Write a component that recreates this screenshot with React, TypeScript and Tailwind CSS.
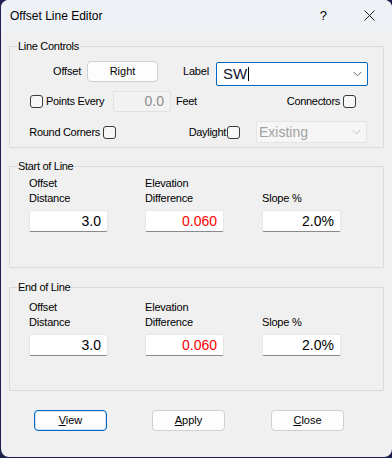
import React from "react";

const FONT = "font-['Liberation_Sans',Arial,sans-serif]";

function Check() {
  return <span className="inline-block w-[13px] h-[13px] rounded-[3px] border border-[#3a3a3a] bg-[#f7f7f7] shrink-0" />;
}

function Chevron({ color }: { color: string }) {
  return (
    <svg width="9" height="6" viewBox="0 0 9 6" className="shrink-0">
      <polyline points="0.5,0.8 4.5,4.8 8.5,0.8" fill="none" stroke={color} strokeWidth="1" />
    </svg>
  );
}

function Field({ value, red }: { value: string; red?: boolean }) {
  return (
    <div
      className={`w-[79px] h-[22px] bg-white border border-[#e6e6e6] border-b-[#8a8a8a] rounded-[2px] flex items-center justify-end pr-[6px] text-[14px] ${
        red ? "text-[#ff0000]" : "text-black"
      }`}
    >
      {value}
    </div>
  );
}

function Group({ title, children, className }: { title: string; children: React.ReactNode; className?: string }) {
  return (
    <fieldset className={`border border-[#d9d9d9] rounded-[1px] ${className ?? ""}`}>
      <legend className="ml-[7px] px-[1px] text-[11px] leading-[14px] tracking-[-0.3px] whitespace-nowrap">{title}</legend>
      {children}
    </fieldset>
  );
}

function LineFields({ pt, pb }: { pt: string; pb: string }) {
  const cols = [
    { l1: "Offset", l2: "Distance", v: "3.0", red: false, w: "w-[116px]" },
    { l1: "Elevation", l2: "Difference", v: "0.060", red: true, w: "w-[117px]" },
    { l1: "", l2: "Slope %", v: "2.0%", red: false, w: "w-[79px]" },
  ];
  return (
    <div className={`flex pl-[19px] ${pt} ${pb}`}>
      {cols.map((c, i) => (
        <div key={i} className={`${c.w} flex flex-col`}>
          <div className="h-[30px] flex flex-col justify-end text-[11px] leading-[15px] tracking-[-0.2px] whitespace-nowrap">
            {c.l1 && <div>{c.l1}</div>}
            <div>{c.l2}</div>
          </div>
          <div className="mt-[4px]">
            <Field value={c.v} red={c.red} />
          </div>
        </div>
      ))}
    </div>
  );
}

function DlgButton({ label, focused }: { label: React.ReactNode; focused?: boolean }) {
  return (
    <div
      className={`w-[73px] h-[21px] rounded-[4px] bg-[#fdfdfd] flex items-center justify-center text-[11px] ${
        focused ? "border border-[#0067c0] shadow-[inset_0_0_0_1px_#cfe3f5]" : "border border-[#d0d0d0]"
      }`}
    >
      {label}
    </div>
  );
}

export default function App() {
  return (
    <div className={`w-[392px] h-[458px] bg-[#1d1f4f] ${FONT} text-black`}>
      <div className="ml-[1px] w-[391px] h-[457px] rounded-[8px] overflow-hidden bg-[#f0f0f0] flex flex-col">
        {/* Title bar */}
        <div className="h-[31px] bg-[#eef2f7] flex items-center pl-[9px] shrink-0">
          <span className="text-[12px]">Offset Line Editor</span>
          <span className="ml-auto text-[13px] mr-[37px]">?</span>
          <svg width="11" height="11" viewBox="0 0 11 11" className="mr-[17px]">
            <path d="M0.5 0.5 L10.5 10.5 M10.5 0.5 L0.5 10.5" stroke="#1a1a1a" strokeWidth="1" />
          </svg>
        </div>

        {/* Body */}
        <div className="flex-1 px-[8px] pt-[8px] flex flex-col whitespace-nowrap">
          <Group title="Line Controls" className="pt-[8px] pb-[4px]">
            {/* Row 1 */}
            <div className="flex items-start h-[25px] text-[11px] tracking-[-0.2px]">
              <div className="w-[71px] text-right leading-[21px]">Offset</div>
              <div className="ml-[6px] w-[71px] h-[21px] rounded-[4px] bg-[#fdfdfd] border border-[#d0d0d0] flex items-center justify-center tracking-normal">
                Right
              </div>
              <div className="ml-[25px] w-[33px] leading-[21px]">Label</div>
              <div className="mt-[1px] w-[152px] h-[24px] bg-white border border-[#0067c0] rounded-[2px] flex items-center pl-[6px] pr-[5px] tracking-normal">
                <span className="text-[15px] text-[#111133]">SW</span>
                <span className="inline-block w-px h-[14px] bg-black ml-[1px]" />
                <span className="ml-auto">
                  <Chevron color="#6a6a6a" />
                </span>
              </div>
            </div>
            {/* Row 2 */}
            <div className="mt-[5px] flex items-center h-[21px] text-[11px] tracking-[-0.3px]">
              <div className="ml-[20px] w-[83px] flex items-center">
                <Check />
                <span className="ml-[3px]">Points Every</span>
              </div>
              <div className="w-[58px] h-[21px] bg-[#f3f3f3] border border-[#e2e2e2] rounded-[2px] flex items-center justify-end pr-[6px] text-[14px] text-[#8c8c8c] tracking-normal">
                0.0
              </div>
              <span className="ml-[5px]">Feet</span>
              <div className="ml-auto mr-[27px] flex items-center">
                <span className="mr-[3px]">Connectors</span>
                <Check />
              </div>
            </div>
            {/* Row 3 */}
            <div className="mt-[9px] flex items-center h-[22px] text-[11px] tracking-[-0.3px]">
              <div className="ml-[20px] w-[86px] flex items-center justify-end">
                <span className="mr-[3px]">Round Corners</span>
                <Check />
              </div>
              <div className="ml-[64px] w-[60px] flex items-center justify-end">
                <span className="mr-[1px]">Daylight</span>
                <Check />
              </div>
              <div className="ml-[16px] w-[111px] h-[22px] bg-[#f6f6f6] border border-[#e4e4e4] rounded-[2px] flex items-center pl-[2px] pr-[5px] tracking-normal">
                <span className="text-[14px] text-[#a3a3a3]">Existing</span>
                <span className="ml-auto">
                  <Chevron color="#c0c0c0" />
                </span>
              </div>
            </div>
          </Group>

          <Group title="Start of Line" className="mt-[11px]">
            <LineFields pt="pt-[3px]" pb="pb-[35px]" />
          </Group>

          <Group title="End of Line" className="mt-[12px]">
            <LineFields pt="pt-[6px]" pb="pb-[34px]" />
          </Group>

          <div className="mt-[19px] flex pl-[25px]">
            <DlgButton focused label={<span><span className="underline">V</span>iew</span>} />
            <div className="ml-[45px]">
              <DlgButton label={<span><span className="underline">A</span>pply</span>} />
            </div>
            <div className="ml-[46px]">
              <DlgButton label={<span><span className="underline">C</span>lose</span>} />
            </div>
          </div>
        </div>
      </div>
    </div>
  );
}
